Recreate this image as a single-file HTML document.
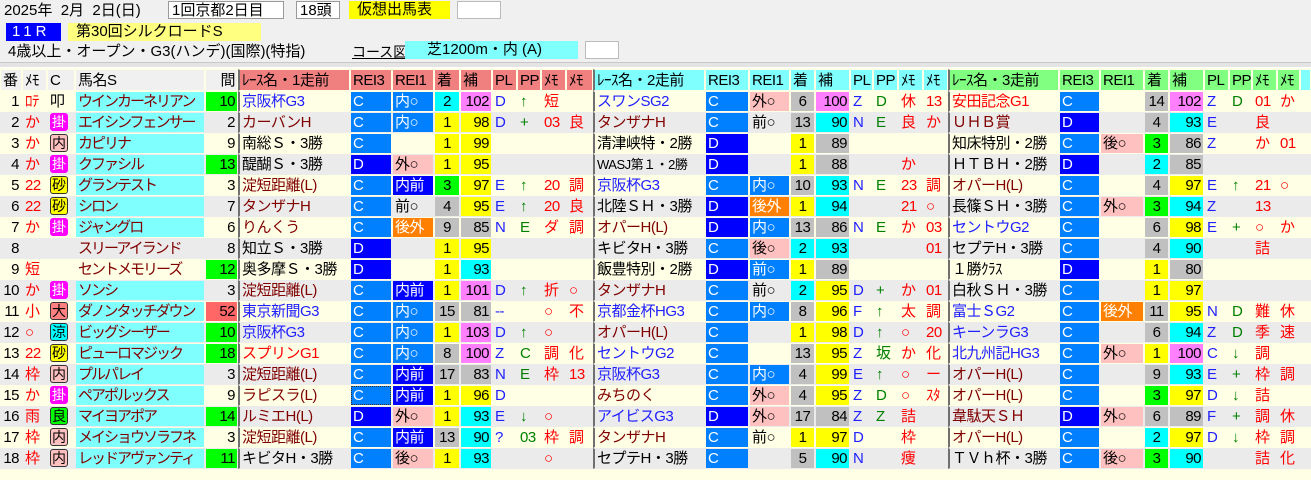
<!DOCTYPE html>
<html><head><meta charset="utf-8">
<style>
*{margin:0;padding:0;box-sizing:border-box}
body{width:1311px;height:480px;overflow:hidden;background:#ffffe6;font-family:"Liberation Sans","Noto Sans CJK JP",sans-serif;font-size:15px;position:relative}
#top{position:absolute;left:0;top:0;width:1311px;height:64px;background:#f0f0f0}
#sep{position:absolute;left:0;top:62px;width:1311px;height:6px;background:#e4e4e4;border-top:1px solid #c8c8c8;border-bottom:1px solid #fff}
.bx{position:absolute;height:18px;line-height:18px;font-size:15px;white-space:nowrap}
table{position:absolute;left:0;top:69px;border-collapse:separate;border-spacing:0;table-layout:fixed;width:1311px}
td,th{height:21px;line-height:19px;border:1px solid transparent;background-clip:padding-box;white-space:nowrap;overflow:hidden;padding:0 2px;font-weight:normal;text-align:left;letter-spacing:-0.5px}
th{background:#f0f0f0;background-clip:padding-box;height:22px}
th.r1{background:#f08080;background-clip:padding-box}
th.r2{background:#80ffff;background-clip:padding-box}
th.r3{background:#80ff80;background-clip:padding-box}
tr.a{background:#ffffe6}tr.b{background:#ebebeb}
.s{border-left:2px solid #707070}
.n{text-align:right}.ce{text-align:center}
.y{background:#ffff00;background-clip:padding-box}
.c{background:#00ffff;background-clip:padding-box}
.g{background:#00ff00;background-clip:padding-box}
.m{background:#ff80ff;background-clip:padding-box}
.gr{background:#c0c0c0;background-clip:padding-box}
.b1{background:#0080ff;background-clip:padding-box;color:#fff}
.b2{background:#0000ff;background-clip:padding-box;color:#fff}
.pk{background:#ffc0c0;background-clip:padding-box}
.or{background:#ff8000;background-clip:padding-box;color:#fff}
.rg{background:#ff6666;background-clip:padding-box}
.nm{background:#80ffff;background-clip:padding-box;color:#800000;letter-spacing:-2px}
.nn{color:#800000;letter-spacing:-2px}
.bl{color:#2020ff}.rd{color:#ff0000}.dr{color:#800000}.gn{color:#008000}.pl{color:#2020ff}
.bd{display:inline-block;width:18px;height:18px;line-height:17px;text-align:center;font-size:14px;border:1px solid #333;border-radius:3px;letter-spacing:0}
.bm{background:#ff00ff;color:#fff;border-color:#ff00ff}
.by{background:#ffff00}
.bp{background:#ffc0c0}
.br{background:#ff8080}
.bc{background:#00ffff}
.bg{background:#00ff00}
</style></head><body>
<div id="top"></div><div id="sep"></div>
<div class="bx" style="left:4px;top:2px">2025年&nbsp; 2月&nbsp; 2日(日)</div>
<div class="bx" style="left:168px;top:1px;width:116px;background:#fff;border:1px solid #999;padding-left:3px">1回京都2日目</div>
<div class="bx" style="left:296px;top:1px;width:44px;background:#fff;border:1px solid #999;padding-left:3px">18頭</div>
<div class="bx" style="left:349px;top:1px;width:101px;background:#ffff00;padding-left:8px">仮想出馬表</div>
<div class="bx" style="left:457px;top:1px;width:44px;background:#fff;border:1px solid #bbb"></div>
<div class="bx" style="left:6px;top:23px;width:55px;background:#0000ff;color:#fff;padding-left:6px;letter-spacing:4px">11R</div>
<div class="bx" style="left:68px;top:23px;width:193px;background:#ffff80;padding-left:8px">第30回シルクロードS</div>
<div class="bx" style="left:8px;top:43px">4歳以上・オープン・G3(ハンデ)(国際)(特指)</div>
<div class="bx" style="left:352px;top:43px;text-decoration:underline;font-size:14px">コース図</div>
<div class="bx" style="left:405px;top:41px;width:173px;background:#80ffff;padding-left:22px">芝1200m・内 (A)</div>
<div class="bx" style="left:585px;top:41px;width:34px;background:#fff;border:1px solid #bbb"></div>
<table>
<colgroup><col style="width:22px"><col style="width:25px"><col style="width:28px"><col style="width:130px"><col style="width:33px">
<col style="width:112px"><col style="width:42px"><col style="width:42px"><col style="width:26px"><col style="width:32px"><col style="width:25px"><col style="width:24px"><col style="width:25px"><col style="width:27px">
<col style="width:112px"><col style="width:44px"><col style="width:41px"><col style="width:25px"><col style="width:35px"><col style="width:23px"><col style="width:25px"><col style="width:25px"><col style="width:25px">
<col style="width:111px"><col style="width:41px"><col style="width:44px"><col style="width:25px"><col style="width:35px"><col style="width:25px"><col style="width:23px"><col style="width:25px"><col style="width:23px"><col style="width:11px"></colgroup>
<tr><th>番</th><th>ﾒﾓ</th><th>C</th><th>馬名S</th><th class="n">間</th>
<th class="r1 s">ﾚｰｽ名・1走前</th><th class="r1">REI3</th><th class="r1">REI1</th><th class="r1">着</th><th class="r1">補</th><th class="r1">PL</th><th class="r1">PP</th><th class="r1">ﾒﾓ</th><th class="r1">ﾒﾓ</th>
<th class="r2 s">ﾚｰｽ名・2走前</th><th class="r2">REI3</th><th class="r2">REI1</th><th class="r2">着</th><th class="r2">補</th><th class="r2">PL</th><th class="r2">PP</th><th class="r2">ﾒﾓ</th><th class="r2">ﾒﾓ</th>
<th class="r3 s">ﾚｰｽ名・3走前</th><th class="r3">REI3</th><th class="r3">REI1</th><th class="r3">着</th><th class="r3">補</th><th class="r3">PL</th><th class="r3">PP</th><th class="r3">ﾒﾓ</th><th class="r3">ﾒﾓ</th><th class="r2"></th></tr>

<tr class="a"><td class="n">1</td><td class="rd">ﾛﾃ</td><td>叩</td><td class="nm">ウインカーネリアン</td><td class="n g">10</td>
<td class="s bl">京阪杯G3</td><td class="b1">C</td><td class="b1">内○</td><td class="ce c">2</td><td class="n m">102</td><td class="pl">D</td><td class="gn">↑</td><td class="rd">短</td><td></td>
<td class="s bl">スワンSG2</td><td class="b1">C</td><td class="pk">外○</td><td class="ce gr">6</td><td class="n m">100</td><td class="pl">Z</td><td class="gn">D</td><td class="rd">休</td><td class="rd">13</td>
<td class="s rd">安田記念G1</td><td class="b1">C</td><td></td><td class="ce gr">14</td><td class="n m">102</td><td class="pl">Z</td><td class="gn">D</td><td class="rd">01</td><td class="rd">か</td><td></td></tr>

<tr class="b"><td class="n">2</td><td class="rd">か</td><td><span class="bd bm">掛</span></td><td class="nm">エイシンフェンサー</td><td class="n">2</td>
<td class="s dr">カーバンH</td><td class="b1">C</td><td class="b1">内○</td><td class="ce y">1</td><td class="n y">98</td><td class="pl">D</td><td class="gn">+</td><td class="rd">03</td><td class="rd">良</td>
<td class="s dr">タンザナH</td><td class="b1">C</td><td>前○</td><td class="ce gr">13</td><td class="n c">90</td><td class="pl">N</td><td class="gn">E</td><td class="rd">良</td><td class="rd">か</td>
<td class="s dr">ＵＨＢ賞</td><td class="b2">D</td><td></td><td class="ce gr">4</td><td class="n c">93</td><td class="pl">E</td><td></td><td class="rd">良</td><td></td><td></td></tr>

<tr class="a"><td class="n">3</td><td class="rd">か</td><td><span class="bd bp">内</span></td><td class="nm">カピリナ</td><td class="n">9</td>
<td class="s">南総Ｓ・3勝</td><td class="b1">C</td><td></td><td class="ce y">1</td><td class="n y">99</td><td></td><td></td><td></td><td></td>
<td class="s">清津峡特・2勝</td><td class="b2">D</td><td></td><td class="ce y">1</td><td class="n gr">89</td><td></td><td></td><td></td><td></td>
<td class="s">知床特別・2勝</td><td class="b1">C</td><td class="pk">後○</td><td class="ce g">3</td><td class="n gr">86</td><td class="pl">Z</td><td></td><td class="rd">か</td><td class="rd">01</td><td></td></tr>

<tr class="b"><td class="n">4</td><td class="rd">か</td><td><span class="bd bm">掛</span></td><td class="nm">クファシル</td><td class="n g">13</td>
<td class="s">醍醐Ｓ・3勝</td><td class="b2">D</td><td class="pk">外○</td><td class="ce y">1</td><td class="n y">95</td><td></td><td></td><td></td><td></td>
<td class="s" style="font-size:13px">WASJ第１・2勝</td><td class="b2">D</td><td></td><td class="ce y">1</td><td class="n gr">88</td><td></td><td></td><td class="rd">か</td><td></td>
<td class="s">ＨＴＢＨ・2勝</td><td class="b2">D</td><td></td><td class="ce c">2</td><td class="n gr">85</td><td></td><td></td><td></td><td></td><td></td></tr>

<tr class="a"><td class="n">5</td><td class="rd">22</td><td><span class="bd by">砂</span></td><td class="nm">グランテスト</td><td class="n">3</td>
<td class="s dr">淀短距離(L)</td><td class="b1">C</td><td class="b2">内前</td><td class="ce g">3</td><td class="n y">97</td><td class="pl">E</td><td class="gn">↑</td><td class="rd">20</td><td class="rd">調</td>
<td class="s bl">京阪杯G3</td><td class="b1">C</td><td class="b1">内○</td><td class="ce gr">10</td><td class="n c">93</td><td class="pl">N</td><td class="gn">E</td><td class="rd">23</td><td class="rd">調</td>
<td class="s dr">オパーH(L)</td><td class="b1">C</td><td></td><td class="ce gr">4</td><td class="n y">97</td><td class="pl">E</td><td class="gn">↑</td><td class="rd">21</td><td class="rd">○</td><td></td></tr>

<tr class="b"><td class="n">6</td><td class="rd">22</td><td><span class="bd by">砂</span></td><td class="nm">シロン</td><td class="n">7</td>
<td class="s dr">タンザナH</td><td class="b1">C</td><td>前○</td><td class="ce gr">4</td><td class="n y">95</td><td class="pl">E</td><td class="gn">↑</td><td class="rd">20</td><td class="rd">良</td>
<td class="s">北陸ＳＨ・3勝</td><td class="b2">D</td><td class="or">後外</td><td class="ce y">1</td><td class="n c">94</td><td></td><td></td><td class="rd">21</td><td class="rd">○</td>
<td class="s">長篠ＳＨ・3勝</td><td class="b1">C</td><td class="pk">外○</td><td class="ce g">3</td><td class="n c">94</td><td class="pl">Z</td><td></td><td class="rd">13</td><td></td><td></td></tr>

<tr class="a"><td class="n">7</td><td class="rd">か</td><td><span class="bd bm">掛</span></td><td class="nm">ジャングロ</td><td class="n">6</td>
<td class="s dr">りんくう</td><td class="b1">C</td><td class="or">後外</td><td class="ce gr">9</td><td class="n gr">85</td><td class="pl">N</td><td class="gn">E</td><td class="rd">ダ</td><td class="rd">調</td>
<td class="s dr">オパーH(L)</td><td class="b2">D</td><td class="b1">内○</td><td class="ce gr">13</td><td class="n gr">86</td><td class="pl">N</td><td class="gn">E</td><td class="rd">か</td><td class="rd">03</td>
<td class="s bl">セントウG2</td><td class="b1">C</td><td></td><td class="ce gr">6</td><td class="n y">98</td><td class="pl">E</td><td class="gn">+</td><td class="rd">○</td><td class="rd">か</td><td></td></tr>

<tr class="b"><td class="n">8</td><td></td><td></td><td class="nn">スリーアイランド</td><td class="n">8</td>
<td class="s">知立Ｓ・3勝</td><td class="b2">D</td><td></td><td class="ce y">1</td><td class="n y">95</td><td></td><td></td><td></td><td></td>
<td class="s">キビタH・3勝</td><td class="b1">C</td><td class="pk">後○</td><td class="ce c">2</td><td class="n c">93</td><td></td><td></td><td></td><td class="rd">01</td>
<td class="s">セプテH・3勝</td><td class="b1">C</td><td></td><td class="ce gr">4</td><td class="n c">90</td><td></td><td></td><td class="rd">詰</td><td></td><td></td></tr>

<tr class="a"><td class="n">9</td><td class="rd">短</td><td></td><td class="nn">セントメモリーズ</td><td class="n g">12</td>
<td class="s">奥多摩Ｓ・3勝</td><td class="b2">D</td><td></td><td class="ce y">1</td><td class="n c">93</td><td></td><td></td><td></td><td></td>
<td class="s">飯豊特別・2勝</td><td class="b2">D</td><td class="b1">前○</td><td class="ce y">1</td><td class="n gr">89</td><td></td><td></td><td></td><td></td>
<td class="s">１勝ｸﾗｽ</td><td class="b2">D</td><td></td><td class="ce y">1</td><td class="n gr">80</td><td></td><td></td><td></td><td></td><td></td></tr>

<tr class="b"><td class="n">10</td><td class="rd">か</td><td><span class="bd bm">掛</span></td><td class="nm">ソンシ</td><td class="n">3</td>
<td class="s dr">淀短距離(L)</td><td class="b1">C</td><td class="b2">内前</td><td class="ce y">1</td><td class="n m">101</td><td class="pl">D</td><td class="gn">↑</td><td class="rd">折</td><td class="rd">○</td>
<td class="s dr">タンザナH</td><td class="b1">C</td><td>前○</td><td class="ce c">2</td><td class="n y">95</td><td class="pl">D</td><td class="gn">+</td><td class="rd">か</td><td class="rd">01</td>
<td class="s">白秋ＳＨ・3勝</td><td class="b1">C</td><td></td><td class="ce y">1</td><td class="n y">97</td><td></td><td></td><td></td><td></td><td></td></tr>

<tr class="a"><td class="n">11</td><td class="rd">小</td><td><span class="bd br">大</span></td><td class="nm">ダノンタッチダウン</td><td class="n rg">52</td>
<td class="s bl">東京新聞G3</td><td class="b1">C</td><td class="b1">内○</td><td class="ce gr">15</td><td class="n gr">81</td><td class="pl">--</td><td></td><td class="rd">○</td><td class="rd">不</td>
<td class="s bl">京都金杯HG3</td><td class="b1">C</td><td class="b1">内○</td><td class="ce gr">8</td><td class="n y">96</td><td class="pl">F</td><td class="gn">↑</td><td class="rd">太</td><td class="rd">調</td>
<td class="s bl">富士ＳG2</td><td class="b1">C</td><td class="or">後外</td><td class="ce gr">11</td><td class="n y">95</td><td class="pl">N</td><td class="gn">D</td><td class="rd">難</td><td class="rd">休</td><td></td></tr>

<tr class="b"><td class="n">12</td><td class="rd">○</td><td><span class="bd bc">涼</span></td><td class="nm">ビッグシーザー</td><td class="n g">10</td>
<td class="s bl">京阪杯G3</td><td class="b1">C</td><td class="b1">内○</td><td class="ce y">1</td><td class="n m">103</td><td class="pl">D</td><td class="gn">↑</td><td class="rd">○</td><td></td>
<td class="s dr">オパーH(L)</td><td class="b1">C</td><td></td><td class="ce y">1</td><td class="n y">98</td><td class="pl">D</td><td class="gn">↑</td><td class="rd">○</td><td class="rd">20</td>
<td class="s bl">キーンラG3</td><td class="b1">C</td><td></td><td class="ce gr">6</td><td class="n c">94</td><td class="pl">Z</td><td class="gn">D</td><td class="rd">季</td><td class="rd">速</td><td></td></tr>

<tr class="a"><td class="n">13</td><td class="rd">22</td><td><span class="bd by">砂</span></td><td class="nm">ピューロマジック</td><td class="n g">18</td>
<td class="s rd">スプリンG1</td><td class="b1">C</td><td class="b1">内○</td><td class="ce gr">8</td><td class="n m">100</td><td class="pl">Z</td><td class="gn">C</td><td class="rd">調</td><td class="rd">化</td>
<td class="s bl">セントウG2</td><td class="b1">C</td><td></td><td class="ce gr">13</td><td class="n y">95</td><td class="pl">Z</td><td class="gn">坂</td><td class="rd">か</td><td class="rd">化</td>
<td class="s bl">北九州記HG3</td><td class="b1">C</td><td class="pk">外○</td><td class="ce y">1</td><td class="n m">100</td><td class="pl">C</td><td class="gn">↓</td><td class="rd">調</td><td></td><td></td></tr>

<tr class="b"><td class="n">14</td><td class="rd">枠</td><td><span class="bd bp">内</span></td><td class="nm">プルパレイ</td><td class="n">3</td>
<td class="s dr">淀短距離(L)</td><td class="b1">C</td><td class="b2">内前</td><td class="ce gr">17</td><td class="n gr">83</td><td class="pl">N</td><td class="gn">E</td><td class="rd">枠</td><td class="rd">13</td>
<td class="s bl">京阪杯G3</td><td class="b1">C</td><td class="b1">内○</td><td class="ce gr">4</td><td class="n y">99</td><td class="pl">E</td><td class="gn">↑</td><td class="rd">○</td><td class="rd">ー</td>
<td class="s dr">オパーH(L)</td><td class="b1">C</td><td></td><td class="ce gr">9</td><td class="n c">93</td><td class="pl">E</td><td class="gn">+</td><td class="rd">枠</td><td class="rd">調</td><td></td></tr>

<tr class="a"><td class="n">15</td><td class="rd">か</td><td><span class="bd bm">掛</span></td><td class="nm">ペアポルックス</td><td class="n">9</td>
<td class="s dr">ラピスラ(L)</td><td class="b1" style="outline:1px dotted #333;outline-offset:-2px">C</td><td class="b2">内前</td><td class="ce y">1</td><td class="n y">96</td><td class="pl">D</td><td></td><td></td><td></td>
<td class="s dr">みちのく</td><td class="b1">C</td><td class="pk">外○</td><td class="ce gr">4</td><td class="n y">95</td><td class="pl">Z</td><td class="gn">D</td><td class="rd">○</td><td class="rd">ｽﾀ</td>
<td class="s dr">オパーH(L)</td><td class="b1">C</td><td></td><td class="ce g">3</td><td class="n y">97</td><td class="pl">D</td><td class="gn">↓</td><td class="rd">詰</td><td></td><td></td></tr>

<tr class="b"><td class="n">16</td><td class="rd">雨</td><td><span class="bd bg">良</span></td><td class="nm">マイヨアポア</td><td class="n g">14</td>
<td class="s dr">ルミエH(L)</td><td class="b2">D</td><td class="pk">外○</td><td class="ce y">1</td><td class="n c">93</td><td class="pl">E</td><td class="gn">↓</td><td class="rd">○</td><td></td>
<td class="s bl">アイビスG3</td><td class="b2">D</td><td class="pk">外○</td><td class="ce gr">17</td><td class="n gr">84</td><td class="pl">Z</td><td class="gn">Z</td><td class="rd">詰</td><td></td>
<td class="s dr">韋駄天ＳＨ</td><td class="b2">D</td><td class="pk">外○</td><td class="ce gr">6</td><td class="n gr">89</td><td class="pl">F</td><td class="gn">+</td><td class="rd">調</td><td class="rd">休</td><td></td></tr>

<tr class="a"><td class="n">17</td><td class="rd">枠</td><td><span class="bd bp">内</span></td><td class="nm">メイショウソラフネ</td><td class="n">3</td>
<td class="s dr">淀短距離(L)</td><td class="b1">C</td><td class="b2">内前</td><td class="ce gr">13</td><td class="n c">90</td><td class="pl">?</td><td class="gn">03</td><td class="rd">枠</td><td class="rd">調</td>
<td class="s dr">タンザナH</td><td class="b1">C</td><td>前○</td><td class="ce y">1</td><td class="n y">97</td><td class="pl">D</td><td></td><td class="rd">枠</td><td></td>
<td class="s dr">オパーH(L)</td><td class="b1">C</td><td></td><td class="ce c">2</td><td class="n y">97</td><td class="pl">D</td><td class="gn">↓</td><td class="rd">枠</td><td class="rd">調</td><td></td></tr>

<tr class="b"><td class="n">18</td><td class="rd">枠</td><td><span class="bd bp">内</span></td><td class="nm">レッドアヴァンティ</td><td class="n g">11</td>
<td class="s">キビタH・3勝</td><td class="b1">C</td><td class="pk">後○</td><td class="ce y">1</td><td class="n c">93</td><td></td><td></td><td class="rd">○</td><td></td>
<td class="s">セプテH・3勝</td><td class="b1">C</td><td></td><td class="ce gr">5</td><td class="n c">90</td><td class="pl">N</td><td></td><td class="rd">痩</td><td></td>
<td class="s">ＴＶｈ杯・3勝</td><td class="b1">C</td><td class="pk">後○</td><td class="ce g">3</td><td class="n c">90</td><td></td><td></td><td class="rd">詰</td><td class="rd">化</td><td></td></tr>
</table>
</body></html>
